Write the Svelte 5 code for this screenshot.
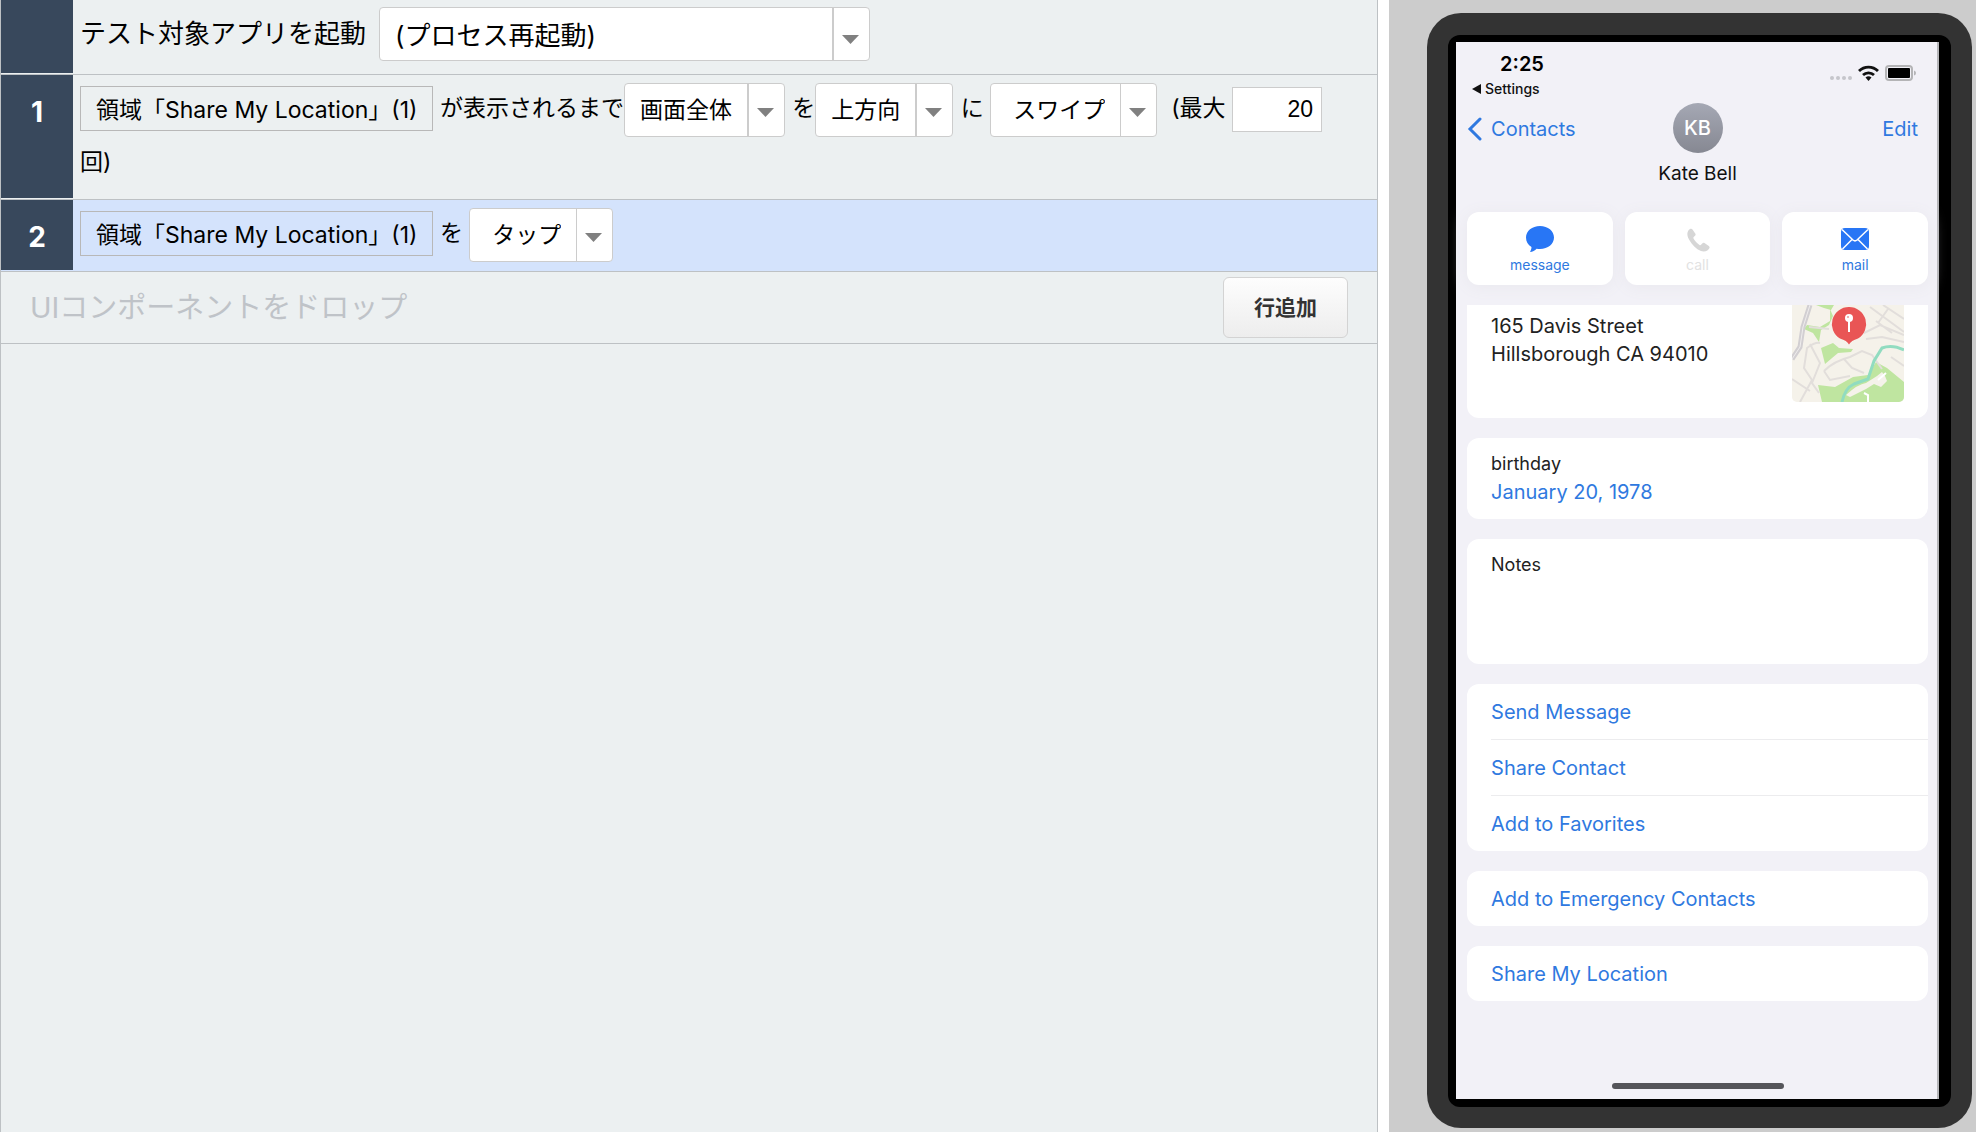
<script>
    let launch = '(プロセス再起動)';
    let area = '画面全体';
    let direction = '上方向';
    let gesture = 'スワイプ';
    let action = 'タップ';
    let max = '20';
    let selected = 2;

    const target = '領域「Share My Location」(1)';

    const groups = [
        ['Send Message', 'Share Contact', 'Add to Favorites'],
        ['Add to Emergency Contacts'],
        ['Share My Location']
    ];

    const select = (n) => {
        selected = n
    }
</script>

{#snippet caret()}
    <svg class="caret" viewBox="0 0 17 9" aria-hidden="true"><path d="M0 0h17L8.500 9z" /></svg>
{/snippet}

<div class="page">
    <main class="editor">
        <div class="row first">
            <div class="num"></div>
            <div class="body">
                <label class="lead" for="launch">テスト対象アプリを起動</label>
                <span class="combo large">
                    <select id="launch" bind:value={launch}>
                        <option>(プロセス再起動)</option>
                    </select>
                    {@render caret()}
                </span>
            </div>
        </div>

        <div class="row" class:selected={selected === 1}>
            <div class="num">1</div>
            <div class="body">
                <button class="chip" on:click={() => select(1)}>{target}</button>
                <span class="word">{' が表示されるまで'}</span>
                <span class="combo">
                    <select aria-label="範囲" bind:value={area}>
                        <option>画面全体</option>
                    </select>
                    {@render caret()}
                </span>
                <span class="word">{' を'}</span>
                <span class="combo">
                    <select aria-label="方向" bind:value={direction}>
                        <option>上方向</option>
                    </select>
                    {@render caret()}
                </span>
                <span class="word">{' に '}</span>
                <span class="combo action">
                    <select aria-label="操作" bind:value={gesture}>
                        <option>スワイプ</option>
                    </select>
                    {@render caret()}
                </span>
                <label class="word" for="max">{'  (最大 '}</label>
                <input id="max" type="text" inputmode="numeric" bind:value={max} />
                <span class="word">回)</span>
            </div>
        </div>

        <div class="row" class:selected={selected === 2}>
            <div class="num">2</div>
            <div class="body">
                <button class="chip" on:click={() => select(2)}>{target}</button>
                <span class="word">{' を '}</span>
                <span class="combo action">
                    <select aria-label="操作" bind:value={action}>
                        <option>タップ</option>
                    </select>
                    {@render caret()}
                </span>
            </div>
        </div>

        <div class="row drop">
            <span>UIコンポーネントをドロップ</span>
            <button class="add">行追加</button>
        </div>
    </main>

    <aside class="preview">
        <div class="phone">
            <div class="bezel">
                <div class="screen">
                    <div class="status">
                        <div class="clock">
                            <span class="time">2:25</span>
                            <a class="back-app" href="#settings">
                                <svg width="9" height="10" viewBox="0 0 9 10"><path d="M9 0v10L0 5z" fill="#111" /></svg>
                                Settings
                            </a>
                        </div>
                        <svg class="signals" width="86" height="16" viewBox="0 0 86 16">
                            <g fill="#c6c6cb">
                                <circle cx="2" cy="13" r="2" />
                                <circle cx="8" cy="13" r="2" />
                                <circle cx="14" cy="13" r="2" />
                                <circle cx="20" cy="13" r="2" />
                            </g>
                            <g fill="none" stroke="#111" stroke-width="2.800">
                                <path d="M29 6a13.500 13.500 0 0 1 19 0" />
                                <path d="M33 10a8 8 0 0 1 11 0" />
                            </g>
                            <path d="M35.500 12.500a4.500 4.500 0 0 1 6 0L38.500 16z" fill="#111" />
                            <rect x="56" y="1" width="26" height="14" rx="3" fill="#f2f1f7" stroke="#b4b4b6" stroke-width="2" />
                            <rect x="58" y="3" width="22" height="10" rx="1" fill="#000" />
                            <path d="M84 5.500q2 .5 2 2.500t-2 2.500z" fill="#b4b4b6" />
                        </svg>
                    </div>

                    <div class="nav">
                        <a class="back" href="#contacts">
                            <svg width="15" height="24" viewBox="0 0 15 24"><path d="M13 2 3 12l10 10" fill="none" stroke="#2f79e0" stroke-width="3" stroke-linecap="round" /></svg>
                            Contacts
                        </a>
                        <div class="person">
                            <div class="avatar">KB</div>
                            <h1>Kate Bell</h1>
                        </div>
                        <a class="edit" href="#edit">Edit</a>
                    </div>

                    <div class="actions">
                        <button>
                            <svg width="28" height="27" viewBox="0 0 28 27"><path d="M14 0C6 0 0 5 0 11.500c0 4 2 7.500 5.500 9.500 0 2-.8 3.600-1.500 5 2.500 0 5-1.500 6.600-3.300 1.100.3 2.200.3 3.400.3 8 0 14-5 14-11.500S22 0 14 0z" fill="#2876f5" /></svg>
                            message
                        </button>
                        <button disabled>
                            <svg width="24" height="27" viewBox="0 0 24 27"><path d="M4 3C1 5 .5 9 3 13.500 6 19 10 23 15 25c4 1.200 7.500-.5 8.500-3 .3-.8 0-1.500-.7-2L18.500 17c-.8-.5-1.500-.4-2 .2l-1.500 1.600c-.4.5-1 .4-1.500.1-2.500-1.500-4.700-3.900-6-6.400-.3-.5-.2-1 .2-1.400L9.200 9.600c.5-.5.5-1.200.2-1.800L6.500 3.400C6 2.600 5 2.400 4 3z" fill="#d6d6d6" /></svg>
                            call
                        </button>
                        <button>
                            <svg width="28" height="27" viewBox="0 0 28 27">
                                <rect y="2" width="28" height="22" rx="4" fill="#2876f5" />
                                <path d="M1 3.500 12 14q2 1.800 4 0L27 3.500M1.500 23l9.500-9.500M26.500 23 17 13.500" fill="none" stroke="#fff" stroke-width="1.500" />
                            </svg>
                            mail
                        </button>
                    </div>

                    <section class="card address">
                        <p>165 Davis Street<br />Hillsborough CA 94010</p>
                        <svg class="map" width="112" height="97" viewBox="0 0 112 97">
                            <rect width="112" height="97" fill="#f5f2ea" />
                            <g fill="#bfe5a0">
                                <path d="M24 0h18l-3 5-7-2zM38 4l3 7-4 9-8 5-2 12-6-9-9-4 3-4 13 2 10-6z" />
                                <path d="M29 43l12-5 6 5 14 1-2 3-13 1-13 11z" />
                                <path d="M26 80l17 2 18-10 15-2 8-13 11 6 17 14v20H30z" />
                            </g>
                            <path d="M54 90q12-11 20-12l11-7 5-4 3 4 2 5-6 6-7-3-8 5-16 8z" fill="#f5f2ea" />
                            <g fill="none" stroke="#e2dedb" stroke-width="2">
                                <path d="M0 74l18 12M8 97l12-22-8-12 3-20q8-6 13-5M18 39l10 19-8 20 7 10" />
                                <path d="M32 66q10-10 26-14l12-6 10 4 10 14M32 66l6 9 20-4M52 54l8 9 12 5M74 34l16-2 22 5M72 28l16-8 24 10M78 2l34 25M91 0l21 14M84 16l16 12M96 4 86 18M99 52l13 9M17 22l20 2" />
                            </g>
                            <path d="M18 0l-7 22-3 20-8 12" fill="none" stroke="#d2cfd2" stroke-width="5" />
                            <path d="M18 0l-7 22-3 20-8 12" fill="none" stroke="#efeded" stroke-width="1" />
                            <path d="M50 97q3-14 12-18l14-5 6-18 8-13q10-4 22 2" fill="none" stroke="#91dcc0" stroke-width="3" />
                            <path d="M76 97v-7l-4-2M86 75l8-7" fill="none" stroke="#fff" stroke-width="2" />
                            <path d="M57 2a17 17 0 0 1 9 31.500q-7 2-9 6-2-4-9-6A17 17 0 0 1 57 2z" fill="#e95555" />
                            <circle cx="57" cy="13" r="4" fill="#fff" />
                            <circle cx="56" cy="12" r="1" fill="#e99" />
                            <path d="M57 16v11" stroke="#fff" stroke-width="2" />
                        </svg>
                    </section>

                    <section class="card birthday">
                        <span>birthday</span>
                        <a href="#birthday">January 20, 1978</a>
                    </section>

                    <section class="card notes">
                        <label for="notes">Notes</label>
                        <textarea id="notes"></textarea>
                    </section>

                    {#each groups as group}
                        <section class="card list">
                            {#each group as item}
                                <button>{item}</button>
                            {/each}
                        </section>
                    {/each}

                    <div class="home"></div>
                </div>
            </div>
        </div>
    </aside>
</div>

<style>
    :global(body) {
        background: #fff;
        font-family: Inter, "Noto Sans CJK JP", sans-serif;
        color: #000;
    }

    * {
        box-sizing: border-box;
    }

    button, select, input, textarea {
        font-family: inherit;
        color: inherit;
    }

    button {
        cursor: pointer;
    }

    a {
        color: #2f79e0;
        text-decoration: none;
    }

    .page {
        display: grid;
        grid-template-columns: 54fr 23fr;
        column-gap: 11px;
        min-height: 100vh;
    }

    /* step editor */

    .editor {
        background: #ecf0f1;
        border: 1px solid #bdc1c4;
        border-width: 0 1px;
        font-size: 23px;
        line-height: 54px;
    }

    .row {
        display: flex;
        min-height: 72px;
        border-bottom: 1px solid #bdc1c4;
    }

    .first {
        min-height: 75px;
    }

    .num {
        flex: none;
        width: 72px;
        margin-bottom: 1px;
        padding-top: 10px;
        background: #38485c;
        color: #fff;
        font-size: 28px;
        font-weight: 700;
        text-align: center;
    }

    .body {
        flex: 1;
        display: flex;
        flex-wrap: wrap;
        align-items: flex-start;
        align-content: flex-start;
        padding: 8px 32px 8px 7px;
    }

    .first .body {
        padding-top: 7px;
    }

    .selected {
        background: #d4e3fc;
    }

    .word {
        padding-bottom: 3px;
        line-height: 51px;
        white-space: pre;
    }

    .lead {
        margin-right: 13px;
        font-size: 26px;
    }

    .chip {
        height: 45px;
        margin-top: 3px;
        padding: 0 15px 2px;
        border: 1px solid #b8b8b8;
        background: none;
        font-size: 23px;
    }

    .combo {
        position: relative;
        display: flex;
        margin-right: 1px;
    }

    .combo::after {
        content: '';
        position: absolute;
        top: 0;
        bottom: 0;
        right: 36px;
        border-right: 2px solid #ccc;
    }

    .action::after {
        border-right-width: 1px;
    }

    .caret {
        position: absolute;
        top: 25px;
        right: 11px;
        width: 17px;
        height: 9px;
        fill: #808080;
        pointer-events: none;
    }

    .large .caret {
        top: 28px;
    }

    select {
        appearance: none;
        height: 54px;
        padding: 0 52px 0 15px;
        border: 1px solid #ccc;
        border-radius: 4px;
        background: #fff;
        font-size: 23px;
    }

    .action select {
        padding: 0 51px 0 22px;
    }

    .large select {
        min-width: 491px;
        padding-top: 2px;
        font-size: 26px;
    }

    input {
        width: 90px;
        height: 45px;
        margin-top: 4px;
        padding: 0 8px;
        border: 1px solid #ccc;
        background: #fff;
        font-family: "Liberation Sans", sans-serif;
        font-size: 23px;
        text-align: right;
    }

    .drop {
        align-items: center;
        justify-content: space-between;
        padding: 0 29px;
        color: #bfc3c8;
        font-size: 29px;
    }

    .add {
        height: 61px;
        padding: 0 30px 4px;
        border: 1px solid #d3d3d3;
        border-radius: 6px;
        background: linear-gradient(#fdfdfd, #ededed);
        color: #333;
        font-size: 21px;
        font-weight: 700;
    }

    /* device preview */

    .preview {
        padding: 13px 4px 3px 38px;
        background: #ccc;
    }

    .phone {
        padding: 22px 21px 21px;
        border-radius: 34px;
        background: #333;
    }

    .bezel {
        padding: 7px 12px 8px 8px;
        border-radius: 12px;
        background: #000;
    }

    .screen {
        display: flex;
        flex-direction: column;
        gap: 20px;
        padding: 9px 9px 10px 11px;
        border-right: 2px solid #b5b5b8;
        background: #f2f1f7;
        font-size: 20px;
        line-height: 28px;
    }

    .status {
        display: flex;
        justify-content: space-between;
        align-items: flex-start;
        margin-bottom: -20px;
        padding: 0 12px 0 5px;
    }

    .clock {
        display: flex;
        flex-direction: column;
        line-height: 26px;
    }

    .time {
        padding-left: 28px;
        font-weight: 600;
    }

    .back-app {
        display: flex;
        align-items: center;
        gap: 4px;
        color: #111;
        font-size: 14px;
        font-weight: 500;
        line-height: 24px;
    }

    .signals {
        margin-top: 14px;
    }

    .nav {
        display: grid;
        grid-template-columns: 1fr auto 1fr;
        align-items: start;
        margin-top: 2px;
        line-height: 52px;
    }

    .back {
        display: flex;
        align-items: center;
        gap: 9px;
    }

    .edit {
        padding-right: 10px;
        text-align: right;
    }

    .avatar {
        width: 50px;
        height: 50px;
        margin: 0 auto;
        border-radius: 50%;
        background: linear-gradient(#a5a8b4, #868892);
        color: #fff;
        font-weight: 500;
        line-height: 50px;
        text-align: center;
    }

    h1 {
        margin: 7px 0 0;
        color: #111;
        font-size: 19px;
        font-weight: 400;
        line-height: 28px;
    }

    .actions {
        display: grid;
        grid-template-columns: repeat(3, 1fr);
        gap: 12px;
        margin-top: 4px;
    }

    .actions button {
        display: flex;
        flex-direction: column;
        align-items: center;
        height: 73px;
        padding: 14px 0 0;
        border: 0;
        border-radius: 12px;
        background: #fff;
        box-shadow: 0 2px 16px #e9e8ee;
        color: #2f79e0;
        font-size: 14px;
        line-height: 23px;
    }

    .actions button:disabled {
        color: #e2e2e2;
    }

    .card {
        display: flex;
        flex-direction: column;
        padding: 0 24px;
        border-radius: 12px;
        background: #fff;
        color: #222;
    }

    .address {
        flex-direction: row;
        justify-content: space-between;
        align-items: flex-start;
        min-height: 113px;
        border-radius: 0 0 12px 12px;
    }

    .address p {
        margin: 7px 0;
    }

    .map {
        border-radius: 0 0 5px 5px;
    }

    .birthday {
        padding-top: 11px;
        padding-bottom: 12px;
        line-height: 29px;
    }

    .birthday span, .notes label {
        font-size: 18px;
        line-height: 29px;
    }

    .notes {
        padding-top: 11px;
        padding-bottom: 11px;
    }

    textarea {
        height: 74px;
        padding: 0;
        border: 0;
        background: none;
        resize: none;
        font-size: 20px;
    }

    .list {
        padding-right: 0;
    }

    .list button {
        height: 55px;
        padding: 0;
        border: 0;
        background: none;
        color: #2f79e0;
        font-size: 20px;
        text-align: left;
    }

    .list button + button {
        height: 56px;
        border-top: 1px solid #ececee;
    }

    .home {
        width: 172px;
        height: 6px;
        margin: 62px auto 0;
        border-radius: 3px;
        background: #55555a;
    }
</style>
